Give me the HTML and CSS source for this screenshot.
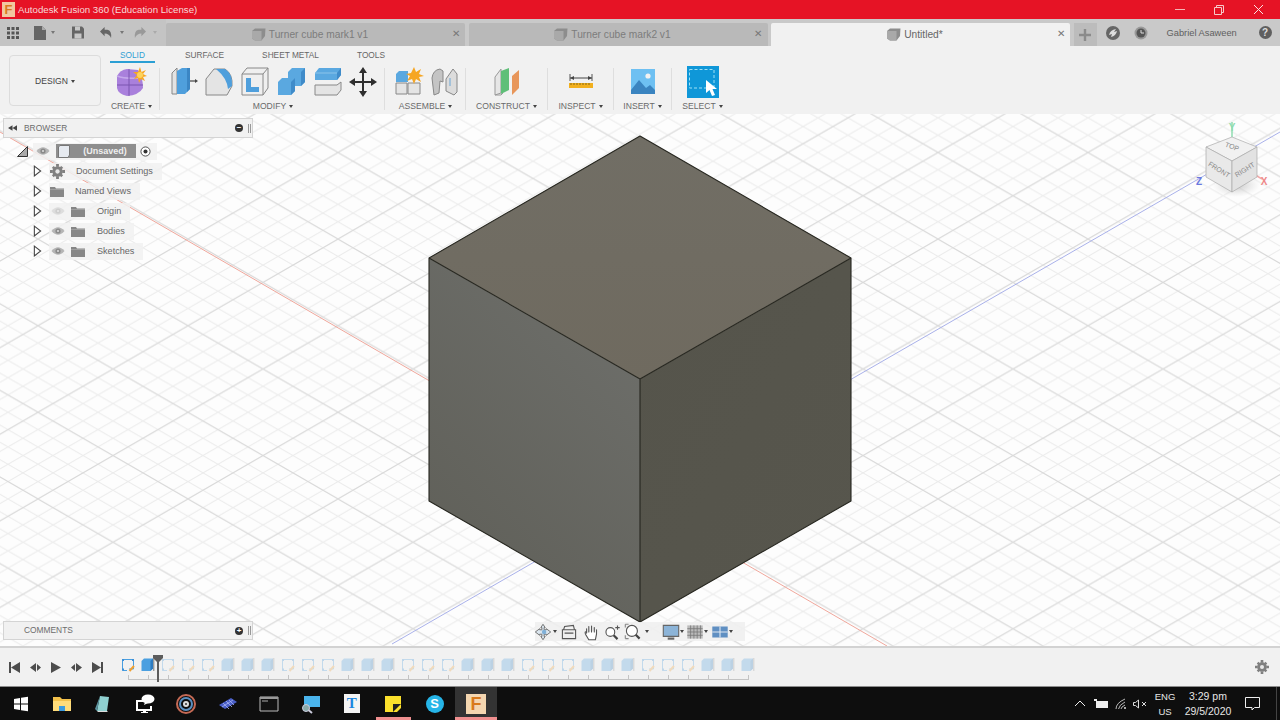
FILE: index.html
```html
<!DOCTYPE html>
<html lang="en">
<head>
<meta charset="utf-8">
<title>Autodesk Fusion 360</title>
<link rel="stylesheet" href="styles.css">
</head>
<body>
<svg class="defs" width="0" height="0" aria-hidden="true">
  <defs>
    <symbol id="tabcube" viewBox="0 0 14 13"><path d="M0 3 3 0.5H13.5L13 8 9.5 12.5H3L0 10.500Z" fill="#8d8d8d"/><path d="M0 3H9.500V12.500H3L0 10.500Z" fill="#a9a9a9"/></symbol>
    <symbol id="eye" viewBox="0 0 14 10"><path d="M0.5 5Q7-2.500 13.500 5 7 12.500 0.5 5Z" fill="#b5b5b5"/><circle cx="7" cy="5" r="2.600" fill="#8a8a8a"/><circle cx="7" cy="5" r="1" fill="#ddd"/></symbol>
    <symbol id="folder" viewBox="0 0 14 11"><path d="M0 1H5L6 2.500H14V11H0Z" fill="#868686"/><path d="M0 3.500H14" stroke="#aaa" stroke-width=".7"/></symbol>
    <symbol id="gear" viewBox="0 0 16 16"><g fill="#808080"><circle cx="8" cy="8" r="5.500"/><path d="M6.500 0H9.500V3H6.500ZM6.500 13H9.500V16H6.500ZM0 6.500H3V9.500H0ZM13 6.500H16V9.500H13ZM2 4 4 2 6 4 4 6ZM10 12 12 10 14 12 12 14ZM12 2 14 4 12 6 10 4ZM4 10 6 12 4 14 2 12Z"/></g><circle cx="8" cy="8" r="2.300" fill="#e8e8e8"/></symbol>
    <symbol id="expand" viewBox="0 0 10 13"><path d="M1.500 1 8.500 6.500 1.500 12Z" fill="#fff" stroke="#444" stroke-width="1.200"/></symbol>
    <symbol id="tlsketch" viewBox="0 0 14 14"><path d="M1.500 1.500H12.500V11H8M1.500 1.500V12.500H6" fill="none" stroke="#4a9fe0" stroke-width="1"/><path d="M1 1H3V3H1ZM11 1H13V3H11ZM1 10.500H3V12.500H1Z" fill="#3a8fd8"/><path d="M8.500 13 13 8" stroke="#f0a030" stroke-width="2"/></symbol>
    <symbol id="tlbody" viewBox="0 0 14 14"><path d="M0.500 3 3 0.500H12V10.500L9.500 13H0.500Z" fill="#4a9fe0"/><path d="M9.500 3 12 0.500V10.500L9.500 13Z" fill="#2f7cc0"/><path d="M12.800 0V13" stroke="#777" stroke-width="1"/></symbol>
  </defs>
</svg>

<div class="app">
  <header class="titlebar">
    <span class="applogo">F</span>
    <span class="apptitle">Autodesk Fusion 360 (Education License)</span>
    <div class="winctl">
      <svg class="winbtn" viewBox="0 0 39 19"><path d="M14 9.500H24" stroke="#f3b5b5" stroke-width="1"/></svg>
      <svg class="winbtn" viewBox="0 0 39 19"><path d="M14.500 7.500H21.500V14.500H14.500ZM16.500 7.500V5.500H23.500V12.500H21.500" fill="none" stroke="#f6c9c9" stroke-width="1"/></svg>
      <svg class="winbtn" viewBox="0 0 39 19"><path d="M15 5 24 14M24 5 15 14" stroke="#fbe3e3" stroke-width="1"/></svg>
    </div>
  </header>

  <div class="tabbar">
    <div class="qat">
      <svg class="waffle" viewBox="0 0 12 12"><path d="M0 0H3V3H0ZM4.500 0H7.500V3H4.500ZM9 0H12V3H9ZM0 4.500H3V7.500H0ZM4.500 4.500H7.500V7.500H4.500ZM9 4.500H12V7.500H9ZM0 9H3V12H0ZM4.500 9H7.500V12H4.500ZM9 9H12V12H9Z" fill="#555"/></svg>
      <svg class="qicon q-file" viewBox="0 0 12 14"><path d="M0 0H8L12 4V14H0Z" fill="#666"/><path d="M8 0V4H12" fill="#aaa"/></svg><i class="caret qc1"></i>
      <svg class="qicon q-save" viewBox="0 0 12 12"><path d="M0 0H10L12 2V12H0Z" fill="#666"/><path d="M3 0H8V4H3ZM2.500 7H9.500V12H2.500Z" fill="#c8c8c8"/></svg>
      <svg class="qicon q-undo" viewBox="0 0 13 12"><path d="M5 0V3H8Q13 4 12 12 10 7 5 7V10L0 5Z" fill="#666"/></svg><i class="caret qc2"></i>
      <svg class="qicon q-redo" viewBox="0 0 13 12"><path d="M8 0V3H5Q0 4 1 12 3 7 8 7V10L13 5Z" fill="#999"/></svg><i class="caret qc3 dim"></i>
    </div>
    <div class="tab">
      <span class="tabname"><svg class="tabicon"><use href="#tabcube"/></svg>Turner cube mark1 v1</span>
      <span class="tabx">✕</span>
    </div>
    <div class="tab">
      <span class="tabname"><svg class="tabicon"><use href="#tabcube"/></svg>Turner cube mark2 v1</span>
      <span class="tabx">✕</span>
    </div>
    <div class="tab active">
      <span class="tabname"><svg class="tabicon"><use href="#tabcube"/></svg>Untitled*</span>
      <span class="tabx">✕</span>
    </div>
    <div class="plus"><svg viewBox="0 0 12 12" class="plusicon"><path d="M4.800 0H7.200V4.800H12V7.200H7.200V12H4.800V7.200H0V4.800H4.800Z" fill="#8b8b8b"/></svg></div>
    <div class="userarea">
      <svg class="uicon u1" viewBox="0 0 14 14"><circle cx="7" cy="7" r="7" fill="#666"/><path d="M3 9Q4 4 10 3L8 6 11 5Q10 10 5 11L6 8Z" fill="#ddd"/></svg>
      <svg class="uicon u2" viewBox="0 0 14 14"><circle cx="7" cy="7" r="6.500" fill="#999"/><circle cx="7" cy="7" r="4.500" fill="#555"/><path d="M7 4V7H10" stroke="#ddd" fill="none"/></svg>
      <span class="username">Gabriel Asaween</span>
      <span class="help">?</span>
    </div>
  </div>

  <div class="ribbon">
    <button class="design">DESIGN<i class="caret dark"></i></button>
    <div class="rtools">
      <div class="rtabs">
        <span class="rtab on">SOLID</span>
        <span class="rtab">SURFACE</span>
        <span class="rtab">SHEET METAL</span>
        <span class="rtab">TOOLS</span>
      </div>
      <div class="groups">
        <div class="group g-create">
          <div class="gicons">
            <svg class="ticon" viewBox="0 0 36 32"><path d="M5 10Q8 4 15 3L26 4Q31 12 31 22 27 29 15 30 6 28 5 22Z" fill="#a980dc"/><path d="M5 10Q12 13 30 12" fill="none" stroke="#c6a9ec" stroke-width="1.500"/><path d="M5 19H31M17 3V30" stroke="#7a55b0" stroke-width="1"/><path d="M28 1 29.500 6 34 4 31 8 35 10 31 11 33 15 29 13 27 17 26 12 22 13 25 9 21 6 26 6Z" fill="#f6a623"/><circle cx="28" cy="9" r="3" fill="#fdd35a"/></svg>
          </div>
          <div class="glabel">CREATE<i class="caret dark"></i></div>
        </div>
        <div class="group g-modify">
          <div class="gicons">
            <svg class="ticon" viewBox="0 0 36 32"><path d="M7 7 12 2V28H7Z" fill="#e3e3e3" stroke="#888"/><path d="M12 5 17 2H25V23L20 28H12Z" fill="#4f9fdc"/><path d="M22 2H25V23L22 26Z" fill="#3b86c4"/><path d="M25 15H31" stroke="#444" stroke-width="1.200"/><path d="M30 13 33 15 30 17Z" fill="#444"/></svg>
            <svg class="ticon" viewBox="0 0 36 32"><path d="M5 13 13 3H24Q32 8 31 20L26 29H5Z" fill="#e4e4e4" stroke="#888"/><path d="M15 3H24Q32 8 31 20L27 23Q26 12 15 3Z" fill="#4f9fdc"/></svg>
            <svg class="ticon" viewBox="0 0 36 32"><path d="M5 8 10 2H31V22L26 29H5Z" fill="#efefef" stroke="#888"/><path d="M5 8H26V29M26 8 31 2" fill="none" stroke="#888"/><path d="M9 12H14V21H22V26H9Z" fill="#4f9fdc"/></svg>
            <svg class="ticon" viewBox="0 0 36 32"><path d="M15 6 19 2H32V16L28 20H15Z" fill="#5aa8e0"/><path d="M28 6 32 2V16L28 20Z" fill="#3f8bc9"/><path d="M5 16 9 12H22V25L18 29H5Z" fill="#5aa8e0"/><path d="M18 16 22 12V25L18 29Z" fill="#3f8bc9"/></svg>
            <svg class="ticon" viewBox="0 0 36 32"><path d="M6 7 10 2H32V9L28 14H6Z" fill="#5aa8e0"/><path d="M28 7 32 2V9L28 14Z" fill="#3f8bc9"/><path d="M6 7H28" stroke="#8cc4ea"/><path d="M6 19H28L32 16V24L28 29H6Z" fill="#e4e4e4" stroke="#888"/></svg>
            <svg class="ticon" viewBox="0 0 36 32"><path d="M18 5V27M7 16H29" stroke="#2f2f2f" stroke-width="2"/><path d="M18 1 22 7H14ZM18 31 14 25H22ZM4 16 10 12V20ZM32 16 26 20V12Z" fill="#2f2f2f"/></svg>
          </div>
          <div class="glabel">MODIFY<i class="caret dark"></i></div>
        </div>
        <div class="group g-assemble">
          <div class="gicons">
            <svg class="ticon" viewBox="0 0 36 32"><path d="M6 8 9 5H18V16H6Z" fill="#5aa8e0"/><path d="M6 17H17V28H6Z" fill="#e4e4e4" stroke="#888"/><path d="M18 17H30V28H18Z" fill="#e4e4e4" stroke="#888"/><path d="M24 1 26 6 31 3 29 8 34 10 29 11 31 16 26 13 24 18 22 13 17 15 20 10 16 8 21 7Z" fill="#f6a623"/></svg>
            <svg class="ticon" viewBox="0 0 36 32"><path d="M6 12Q7 4 14 3L17 5V16L14 15 13 27 8 29Z" fill="#c4c4c4" stroke="#888"/><path d="M20 13 27 3 31 8V26L28 29 20 25Z" fill="#dcdcdc" stroke="#888"/><path d="M24 12V20" stroke="#6aa6d6"/></svg>
          </div>
          <div class="glabel">ASSEMBLE<i class="caret dark"></i></div>
        </div>
        <div class="group g-construct">
          <div class="gicons">
            <svg class="ticon" viewBox="0 0 36 32"><path d="M6 11 12 3V27L6 29Z" fill="#e6e6e6" stroke="#999"/><path d="M12 5 20 2V24L12 28Z" fill="#5fbf78"/><path d="M6 29H12L14 27" stroke="#999" fill="none"/><path d="M23 10 30 4V22L23 29Z" fill="#e8965a"/></svg>
          </div>
          <div class="glabel">CONSTRUCT<i class="caret dark"></i></div>
        </div>
        <div class="group g-inspect">
          <div class="gicons">
            <svg class="ticon" viewBox="0 0 36 32"><path d="M7 12H29" stroke="#444"/><path d="M7 8V15M29 8V15" stroke="#555"/><path d="M7 12 11 10V14ZM29 12 25 10V14Z" fill="#444"/><path d="M6 17H30V22H6Z" fill="#f2b01e"/><path d="M8 17V19M11 17V19M14 17V19M17 17V19M20 17V19M23 17V19M26 17V19" stroke="#8a6a10"/></svg>
          </div>
          <div class="glabel">INSPECT<i class="caret dark"></i></div>
        </div>
        <div class="group g-insert">
          <div class="gicons">
            <svg class="ticon" viewBox="0 0 36 32"><path d="M6 3H30V28H6Z" fill="#6ec0f2"/><circle cx="23" cy="10" r="2.600" fill="#f2f2f2"/><path d="M6 24 14 14 21 22 25 19 30 24V28H6Z" fill="#3a84c0"/></svg>
          </div>
          <div class="glabel">INSERT<i class="caret dark"></i></div>
        </div>
        <div class="group g-select">
          <div class="gicons">
            <svg class="ticon" viewBox="0 0 36 32"><path d="M2 0H34V32H2Z" fill="#0f97d8"/><path d="M4.500 3.500H29V22H4.500Z" fill="none" stroke="#9fe0f5" stroke-dasharray="3 2"/><path d="M21 14 21 27 24.500 24 27 30 30 29 27.500 23 32 23Z" fill="#fff"/></svg>
          </div>
          <div class="glabel">SELECT<i class="caret dark"></i></div>
        </div>
      </div>
    </div>
  </div>

  <main class="viewport">
    <svg class="scene" viewBox="0 114 1280 532" preserveAspectRatio="none">
      <defs>
        <pattern id="grid" width="150" height="86.6" patternUnits="userSpaceOnUse" patternTransform="translate(488 152.500)">
          <path d="M-120 0 30 86.600M-90 0 60 86.600M-60 0 90 86.600M-30 0 120 86.600M30 0 180 86.600M60 0 210 86.600M90 0 240 86.600M120 0 270 86.600M-120 86.600 30 0M-90 86.600 60 0M-60 86.600 90 0M-30 86.600 120 0M30 86.600 180 0M60 86.600 210 0M90 86.600 240 0M120 86.600 270 0" stroke="#ececec" stroke-width="1" fill="none"/>
          <path d="M0 0 150 86.600M0 86.600 150 0" stroke="#d9d9d9" stroke-width="1.100" fill="none"/>
        </pattern>
        <linearGradient id="ftop" x1="0" y1="0" x2="0" y2="1"><stop offset="0" stop-color="#716e65"/><stop offset="1" stop-color="#6f6a5f"/></linearGradient>
        <linearGradient id="fleft" x1="0.800" y1="0" x2="0.200" y2="1"><stop offset="0" stop-color="#6e6f6b"/><stop offset="1" stop-color="#5f5f58"/></linearGradient>
        <linearGradient id="fright" x1="0" y1="0" x2="1" y2="1"><stop offset="0" stop-color="#55544b"/><stop offset="1" stop-color="#57564d"/></linearGradient>
        <radialGradient id="cubeshadow"><stop offset="0" stop-color="#999" stop-opacity=".55"/><stop offset="1" stop-color="#bbb" stop-opacity="0"/></radialGradient>
      </defs>
      <rect x="0" y="114" width="1280" height="532" fill="#fdfdfd"/>
      <rect x="0" y="114" width="1280" height="532" fill="url(#grid)"/>
      <path d="M0 132 887 646" stroke="#f0a79c" stroke-width="1" fill="none"/>
      <path d="M392 644 1280 132" stroke="#a9b1ea" stroke-width="1" fill="none"/>

      <path d="M640 136 851 258 640 379 429 258Z" fill="url(#ftop)"/>
      <path d="M429 258 640 379V622L429 501Z" fill="url(#fleft)"/>
      <path d="M851 258 640 379V622L851 501Z" fill="url(#fright)"/>
      <path d="M640 136 851 258V501L640 622 429 501V258ZM429 258 640 379 851 258M640 379V622" fill="none" stroke="#26261f" stroke-width="1.100" stroke-linejoin="round"/>

      <ellipse cx="1236" cy="185" rx="24" ry="12" fill="url(#cubeshadow)"/>
      <path d="M1232 137V122" stroke="#8fdcb0" stroke-width="1.500"/>
      <path d="M1232 161 1262 179" stroke="#f3a8a8" stroke-width="1.500"/>
      <path d="M1232 137 1257 147 1232 161 1206 147Z" fill="#f1f1f1" stroke="#aaa" stroke-width=".7"/>
      <path d="M1206 147 1232 161V192L1206 177Z" fill="#e9e9e9" stroke="#aaa" stroke-width=".7"/>
      <path d="M1257 147 1232 161V192L1257 177Z" fill="#e2e2e2" stroke="#aaa" stroke-width=".7"/>
      <text class="vc" x="1232" y="149" transform="rotate(20 1232 147)">TOP</text>
      <text class="vc" x="1219" y="172" transform="rotate(32 1219 170)">FRONT</text>
      <text class="vc" x="1245" y="172" transform="rotate(-32 1245 170)">RIGHT</text>
      <text class="axis ay" x="1232" y="131">Y</text>
      <text class="axis ax" x="1264" y="185">X</text>
      <text class="axis az" x="1199" y="185">Z</text>
    </svg>

    <section class="panel browser">
      <svg class="pback" viewBox="0 0 10 6"><path d="M5 0V6L0 3ZM10 0V6L5 3Z" fill="#444"/></svg>
      <span class="ptitle">BROWSER</span>
      <span class="pdot">−</span>
      <span class="pgrip"></span>
    </section>

    <div class="tree">
      <div class="row root">
        <svg class="corner" viewBox="0 0 11 11"><path d="M0.500 10.500 10.500 0.500V10.500Z" fill="#aaa" stroke="#333"/></svg>
        <div class="chip rootchip">
          <svg class="eye"><use href="#eye"/></svg>
          <span class="doc"><svg class="docicon" viewBox="0 0 12 13"><path d="M0.500 2 2 0.500H11.500V10L10 12.500H0.500Z" fill="#e6eaf0" stroke="#777"/></svg><span class="docname">(Unsaved)</span></span>
          <svg class="radio" viewBox="0 0 12 12"><circle cx="6" cy="6" r="5" fill="#fff" stroke="#444"/><circle cx="6" cy="6" r="2.200" fill="#333"/></svg>
        </div>
      </div>
      <div class="row">
        <svg class="exp"><use href="#expand"/></svg>
        <div class="chip"><svg class="gear"><use href="#gear"/></svg><span class="rname">Document Settings</span></div>
      </div>
      <div class="row">
        <svg class="exp"><use href="#expand"/></svg>
        <div class="chip"><svg class="fold"><use href="#folder"/></svg><span class="rname">Named Views</span></div>
      </div>
      <div class="row">
        <svg class="exp"><use href="#expand"/></svg>
        <div class="chip"><svg class="eye off"><use href="#eye"/></svg><svg class="fold infold"><use href="#folder"/></svg><span class="rname inname">Origin</span></div>
      </div>
      <div class="row">
        <svg class="exp"><use href="#expand"/></svg>
        <div class="chip"><svg class="eye"><use href="#eye"/></svg><svg class="fold infold"><use href="#folder"/></svg><span class="rname inname">Bodies</span></div>
      </div>
      <div class="row">
        <svg class="exp"><use href="#expand"/></svg>
        <div class="chip"><svg class="eye"><use href="#eye"/></svg><svg class="fold infold"><use href="#folder"/></svg><span class="rname inname">Sketches</span></div>
      </div>
    </div>

    <section class="panel comments">
      <span class="ptitle">COMMENTS</span>
      <span class="pdot">+</span>
      <span class="pgrip"></span>
    </section>

    <div class="navbar">
      <span class="nb"><svg class="nicon" viewBox="0 0 14 14"><path d="M7 0 9 3H8V5H10V4L14 7 10 10V9H8V11H9L7 14 5 11H6V9H4V10L0 7 4 4V5H6V3H5Z" fill="#dbe6ef" stroke="#666" stroke-width=".8"/><circle cx="8" cy="7" r="2" fill="#7fb0d8"/></svg><i class="caret dark"></i></span>
      <span class="nb nb-look"><svg class="nicon" viewBox="0 0 14 14"><path d="M1 5H13V13H1Z" fill="#eee" stroke="#555"/><path d="M2 5 3 2 11 1 12 5M3 8H11" stroke="#555" fill="none"/></svg></span>
      <span class="nb nb-hand"><svg class="nicon" viewBox="0 0 14 14"><path d="M3 8V4M5 7V2M7.500 7V1.500M10 7V3M3 8 3 7Q1 6 2 9L5 14H11L12 9V5" fill="#fff" stroke="#555" stroke-linecap="round"/></svg></span>
      <span class="nb nb-zoom"><svg class="nicon" viewBox="0 0 14 14"><circle cx="5.500" cy="7" r="4" fill="#fff" stroke="#555"/><path d="M8.500 10 12 13.500" stroke="#444" stroke-width="2"/><path d="M10 3H14M12 1V5" stroke="#555"/></svg></span>
      <span class="nb nb-zoom"><svg class="nicon" viewBox="0 0 14 14"><circle cx="6" cy="6" r="5" fill="#fff" stroke="#555"/><path d="M9.500 9.500 13 13" stroke="#444" stroke-width="2"/><path d="M0 0H3M0 0V3M0 13H3M0 13V10" stroke="#888"/></svg><i class="caret dark gapc"></i></span>
      <span class="nb nb-disp"><svg class="nicon" viewBox="0 0 14 14"><path d="M0 1H14V11H0Z" fill="#8cb4d8" stroke="#666"/><path d="M4 13H10" stroke="#666" stroke-width="2"/></svg><i class="caret dark tight"></i></span>
      <span class="nb nb-grid"><svg class="nicon" viewBox="0 0 14 14"><path d="M0 1H14V13H0Z" fill="#bbb"/><path d="M0 4H14M0 7H14M0 10H14M3 1V13M6 1V13M9 1V13M12 1V13" stroke="#777" stroke-width=".7"/></svg><i class="caret dark tight"></i></span>
      <span class="nb nb-view"><svg class="nicon" viewBox="0 0 14 14"><path d="M0 2H14V12H0Z" fill="#5f8fc2"/><path d="M7 2V12M0 7H14" stroke="#dfe8f2"/></svg><i class="caret dark tight"></i></span>
    </div>
  </main>

  <footer class="timeline">
    <div class="tctrls">
      <span class="tc"><svg viewBox="0 0 11 11"><path d="M0 0H2V11H0ZM11 0V11L2 5.500Z" fill="#4d4d4d"/></svg></span>
      <span class="tc"><svg viewBox="0 0 11 11"><path d="M6 1V10L0 5.500ZM7 2 11 5.500 7 9Z" fill="#4d4d4d"/></svg></span>
      <span class="tc"><svg viewBox="0 0 11 11"><path d="M1 0 11 5.500 1 11Z" fill="#4d4d4d"/></svg></span>
      <span class="tc"><svg viewBox="0 0 11 11"><path d="M5 1V10L11 5.500ZM4 2 0 5.500 4 9Z" fill="#4d4d4d"/></svg></span>
      <span class="tc"><svg viewBox="0 0 11 11"><path d="M9 0H11V11H9ZM0 0V11L9 5.500Z" fill="#4d4d4d"/></svg></span>
    </div>
    <div class="track">
      <svg class="ti"><use href="#tlsketch"/></svg><svg class="ti"><use href="#tlbody"/></svg>
      <svg class="ti f"><use href="#tlsketch"/></svg><svg class="ti f"><use href="#tlsketch"/></svg><svg class="ti f"><use href="#tlsketch"/></svg>
      <svg class="ti f"><use href="#tlbody"/></svg><svg class="ti f"><use href="#tlbody"/></svg><svg class="ti f"><use href="#tlbody"/></svg>
      <svg class="ti f"><use href="#tlsketch"/></svg><svg class="ti f"><use href="#tlsketch"/></svg><svg class="ti f"><use href="#tlsketch"/></svg>
      <svg class="ti f"><use href="#tlbody"/></svg><svg class="ti f"><use href="#tlbody"/></svg><svg class="ti f"><use href="#tlbody"/></svg>
      <svg class="ti f"><use href="#tlsketch"/></svg><svg class="ti f"><use href="#tlsketch"/></svg><svg class="ti f"><use href="#tlsketch"/></svg>
      <svg class="ti f"><use href="#tlbody"/></svg><svg class="ti f"><use href="#tlbody"/></svg><svg class="ti f"><use href="#tlbody"/></svg>
      <svg class="ti f"><use href="#tlsketch"/></svg><svg class="ti f"><use href="#tlsketch"/></svg><svg class="ti f"><use href="#tlsketch"/></svg>
      <svg class="ti f"><use href="#tlbody"/></svg><svg class="ti f"><use href="#tlbody"/></svg><svg class="ti f"><use href="#tlbody"/></svg>
      <svg class="ti f"><use href="#tlsketch"/></svg><svg class="ti f"><use href="#tlsketch"/></svg><svg class="ti f"><use href="#tlsketch"/></svg>
      <svg class="ti f"><use href="#tlbody"/></svg><svg class="ti f"><use href="#tlbody"/></svg><svg class="ti f"><use href="#tlbody"/></svg>
      <span class="scale"></span>
      <svg class="playhead" viewBox="0 0 10 27"><path d="M0 0H10V3L6 7V27H4V7L0 3Z" fill="#5c5c5c"/></svg>
    </div>
    <svg class="tlgear"><use href="#gear"/></svg>
  </footer>

  <nav class="taskbar">
    <div class="tapps">
      <span class="tapp"><svg class="ta" viewBox="0 0 20 20"><path d="M3 5 9 4V9.500H3ZM10 3.800 17 2.800V9.500H10ZM3 10.500H9V16L3 15ZM10 10.500H17V17.200L10 16.200Z" fill="#fff"/></svg></span>
      <span class="tapp"><svg class="ta" viewBox="0 0 20 20"><path d="M1 3H8L10 5H19V17H1Z" fill="#f3c14b"/><path d="M1 7H19V17H1Z" fill="#ffdc7a"/><path d="M7 12H13V17H7Z" fill="#3a9be0"/></svg></span>
      <span class="tapp"><svg class="ta" viewBox="0 0 20 20"><path d="M7 2 16 3 14 17 4 17Z" fill="#8fd0d0"/><path d="M7 2 4 17 2 15Z" fill="#5b93a0"/><path d="M4 17H14L15 18H5Z" fill="#ddd"/></svg></span>
      <span class="tapp"><svg class="ta" viewBox="0 0 20 20"><path d="M1 6H9V8H3V15H15V12H17V17H11V18H13V19H6V18H8V17H1Z" fill="#fff"/><ellipse cx="13" cy="5" rx="6.500" ry="4.500" fill="#fff"/><path d="M10 8 9 11 13 9Z" fill="#fff"/></svg></span>
      <span class="tapp"><svg class="ta" viewBox="0 0 20 20"><circle cx="10" cy="10" r="9" fill="none" stroke="#c56a55" stroke-width="2"/><circle cx="10" cy="10" r="6" fill="none" stroke="#5a8fc0" stroke-width="2"/><circle cx="10" cy="10" r="3" fill="#ddd"/><circle cx="10" cy="10" r="1" fill="#333"/></svg></span>
      <span class="tapp"><svg class="ta" viewBox="0 0 20 20"><path d="M1 11 13 4 19 8 7 15Z" fill="#4a5fc8"/><path d="M5 9 11 15M8 7 14 13M11 6 16 11M4 13 15 6" stroke="#aab4f0" stroke-width=".8"/></svg></span>
      <span class="tapp"><svg class="ta" viewBox="0 0 20 20"><path d="M1 3H19V17H1Z" fill="#111" stroke="#bbb"/><path d="M1 3H19V5H1Z" fill="#999"/><path d="M3 7H9" stroke="#aaa"/></svg></span>
      <span class="tapp"><svg class="ta" viewBox="0 0 20 20"><path d="M4 2H20V13H4Z" fill="#4ab4ec"/><circle cx="6" cy="14" r="3.500" fill="#8aa" stroke="#ccd"/><path d="M8.500 16 12 19" stroke="#ccd" stroke-width="2"/></svg></span>
      <span class="tapp"><span class="tfile">T</span></span>
      <span class="tapp running"><svg class="ta" viewBox="0 0 20 20"><path d="M2 2H18V14L14 18H2Z" fill="#fbe02c"/><path d="M10 18 18 10H10Z" fill="#222"/></svg></span>
      <span class="tapp"><span class="skype">S</span></span>
      <span class="tapp running current"><span class="tfusion">F</span></span>
    </div>
    <div class="tray">
      <svg class="tr tr-chev" viewBox="0 0 12 7"><path d="M1 6 6 1 11 6" fill="none" stroke="#eee"/></svg>
      <svg class="tr tr-bat" viewBox="0 0 14 9"><path d="M2 2H14V9H2Z" fill="#eee"/><path d="M0 0H3V2H0Z" fill="#eee"/></svg>
      <svg class="tr tr-wifi" viewBox="0 0 13 12"><path d="M1 11Q1 5 10 1M3.500 11Q4 7 10 4M6 11Q6 9 10 7" fill="none" stroke="#ccc" stroke-width=".9"/><circle cx="10" cy="10" r="1" fill="#ddd"/></svg>
      <svg class="tr tr-vol" viewBox="0 0 14 10"><path d="M0.500 3.500H2.500L5.500 1V9L2.500 6.500H0.500Z" fill="none" stroke="#ddd"/><path d="M9 3 13 7M13 3 9 7" stroke="#ddd"/></svg>
      <div class="lang"><span>ENG</span><span>US</span></div>
      <div class="clock"><span>3:29 pm</span><span>29/5/2020</span></div>
      <svg class="tr tr-note" viewBox="0 0 15 14"><path d="M0.500 0.500H14.500V10.500H9.500L7 13V10.500H0.500Z" fill="none" stroke="#eee"/></svg>
      <span class="showdesk"></span>
    </div>
  </nav>
</div>
</body>
</html>
```

FILE: styles.css
```css
* { box-sizing: border-box; }
html, body { margin: 0; padding: 0; height: 100%; overflow: hidden; }
body { font-family: "Liberation Sans", Arial, sans-serif; color: #666; background: #fff; }
.defs { position: absolute; }
.app { width: 1280px; height: 720px; display: flex; flex-direction: column; }

.caret { display: inline-block; width: 0; height: 0; border-left: 2.500px solid transparent; border-right: 2.500px solid transparent; border-top: 3px solid #777; }
.caret.dark { border-top-color: #444; margin-left: 3px; vertical-align: 1px; }
.caret.dim { border-top-color: #aaa; }

/* title bar */
.titlebar { height: 19px; background: #e61325; display: flex; align-items: center; padding-left: 2px; color: #f7d9d9; flex: none; }
.applogo { width: 13px; height: 15px; background: #f2c8a0; color: #d97a1e; font: bold 13px/15px "Liberation Sans", sans-serif; text-align: center; }
.apptitle { font-size: 9.700px; margin-left: 3px; }
.winctl { margin-left: auto; display: flex; margin-right: 2px; }
.winbtn { width: 39px; height: 19px; display: block; }

/* tab bar */
.tabbar { height: 27px; background: #c9c9c9; display: flex; align-items: flex-end; flex: none; position: relative; }
.qat { width: 166px; height: 27px; display: flex; align-items: center; flex: none; background: #c4c4c4; }
.waffle { width: 12px; height: 12px; margin-left: 7px; }
.qicon { width: 12px; height: 13px; flex: none; }
.q-file { margin-left: 15px; height: 14px; }
.qc1 { margin-left: 5px; }
.q-save { margin-left: 17px; }
.q-undo { margin-left: 16px; }
.qc2 { margin-left: 8px; }
.q-redo { margin-left: 10px; }
.qc3 { margin-left: 7px; }
.tab { width: 299px; height: 23px; background: #b9b9b9; margin-right: 3.500px; border-radius: 2px 2px 0 0; display: flex; align-items: center; position: relative; color: #7c7c7c; font-size: 10.200px; justify-content: center; padding-right: 11px; flex: none; }
.tab.active { background: #f1f1f1; color: #666; }
.tabname { display: flex; align-items: center; }
.tabicon { width: 14px; height: 13px; margin-right: 3px; }
.tabx { position: absolute; right: 3.500px; top: 4px; width: 12px; font-size: 10px; line-height: 14px; text-align: center; color: #777; }
.plus { width: 23px; height: 23px; background: #bcbcbc; display: flex; align-items: center; justify-content: center; flex: none; }
.plusicon { width: 12px; height: 12px; }
.userarea { height: 27px; flex: 1; display: flex; align-items: center; }
.uicon { width: 14px; height: 14px; }
.u1 { margin-left: 9px; }
.u2 { margin-left: 14px; }
.username { font-size: 9.300px; color: #5f5f5f; margin-left: 19px; width: 70px; white-space: nowrap; }
.help { width: 13px; height: 13px; border-radius: 50%; background: #5f5f5f; color: #ddd; font: bold 10px/13px "Liberation Sans", sans-serif; text-align: center; margin-left: 22px; }

/* ribbon */
.ribbon { height: 68px; background: #f1f1f1; display: flex; align-items: flex-start; padding-left: 9px; flex: none; }
.design { width: 92px; height: 51px; margin: 9px 3px 0 0; border: 1px solid #dcdcdc; border-radius: 4px; background: #f1f1f1; color: #444; font: 8.600px "Liberation Sans", sans-serif; padding: 0; flex: none; }
.rtools { display: flex; flex-direction: column; padding-top: 2px; }
.rtabs { display: flex; gap: 38px; height: 15px; margin-left: 6px; font-size: 8.300px; line-height: 14px; color: #666; }
.rtab { white-space: nowrap; height: 15px; }
.rtab.on { color: #2f9fd3; border-bottom: 2px solid #2b9fd4; padding: 0 10px; margin-right: -8px; }
.groups { display: flex; margin-top: 3px; }
.group { position: relative; display: flex; flex-direction: column; align-items: center; border-right: 1px solid transparent; flex: none; }
.group::after { content: ""; position: absolute; right: -1px; top: 2px; bottom: 3px; width: 1px; background: #dedede; }
.group.g-select::after { display: none; }
.g-create { width: 56px; }
.g-create .ticon { margin-right: 4px; }
.g-modify { width: 225px; padding-left: 2px; }
.g-assemble { width: 81px; padding-left: 1px; }
.g-construct { width: 82px; }
.g-inspect { width: 66px; }
.g-insert { width: 58px; }
.g-select { width: 60px; padding-left: 2px; }
.gicons { display: flex; height: 33px; }
.ticon { width: 36px; height: 32px; display: block; flex: none; }
.glabel { font-size: 8.600px; line-height: 14px; height: 14px; color: #6a6a6a; white-space: nowrap; }

/* viewport */
.viewport { flex: 1; position: relative; overflow: hidden; min-height: 0; }
.scene { position: absolute; inset: 0; width: 100%; height: 100%; display: block; }
.vc { font: 7px "Liberation Sans", sans-serif; fill: #888; text-anchor: middle; }
.axis { font: bold 10px "Liberation Sans", sans-serif; text-anchor: middle; }
.ay { fill: #8fdcb0; } .ax { fill: #e88; } .az { fill: #6a78e0; }

.panel { position: absolute; left: 3px; width: 250px; background: #f1f1f1; border: 1px solid #d4d4d4; display: flex; align-items: center; font-size: 8.400px; color: #6c6c6c; }
.browser { top: 4px; height: 20px; }
.comments { top: 507px; height: 19px; }
.pback { width: 9px; height: 6px; margin-left: 4px; margin-right: 7px; }
.ptitle { padding-bottom: 1px; }
.comments .ptitle { margin-left: 20px; }
.pdot { margin-left: auto; width: 8px; height: 8px; border-radius: 50%; background: #333; color: #fff; font: bold 8px/8px "Liberation Sans", sans-serif; text-align: center; }
.pgrip { width: 3px; height: 9px; margin: 0 1px 0 5px; border-left: 1px solid #999; border-right: 1px solid #999; }

.tree { position: absolute; left: 0; top: 27px; display: flex; flex-direction: column; font-size: 9.100px; color: #666; }
.row { height: 20px; display: flex; align-items: center; padding-left: 33px; }
.exp { width: 9px; height: 12px; margin-right: 7px; flex: none; }
.chip { height: 17px; background: rgba(241,241,241,.85); display: flex; align-items: center; padding: 0 9px 0 0; white-space: nowrap; }
.root { padding-left: 17px; }
.corner { width: 11px; height: 11px; margin-right: 5px; flex: none; }
.rootchip { padding: 0 6px 0 3px; }
.rootchip .eye { margin-left: 0; margin-right: 6px; }
.eye { width: 14px; height: 10px; margin-left: 2px; flex: none; }
.eye.off { opacity: .35; }
.gear { width: 15px; height: 15px; margin-left: 1px; flex: none; }
.fold { width: 14px; height: 11px; margin-left: 1px; flex: none; }
.infold { margin-left: 6px; }
.rname { margin-left: 11px; }
.inname { margin-left: 12px; }
.doc { width: 80px; height: 14px; background: #8e8e8e; color: #eee; display: flex; align-items: center; font-weight: bold; font-size: 9px; }
.docicon { width: 12px; height: 13px; margin-left: 2px; flex: none; }
.docname { flex: 1; text-align: center; padding-left: 4px; }
.radio { width: 11px; height: 11px; margin-left: 4px; flex: none; }

.navbar { position: absolute; left: 535px; top: 508px; width: 210px; height: 19px; background: rgba(238,238,238,.85); display: flex; align-items: center; padding-left: 1px; }
.nb { display: flex; align-items: center; flex: none; }
.nicon { width: 14px; height: 14px; overflow: visible; flex: none; transform: scale(1.1); }
.nb .caret.dark { margin: 0 0 0 3px; }
.nb .caret.gapc { margin-left: 5px; }
.nb .caret.tight { margin-left: 2px; }
.nb-look { margin-left: 5px; }
.nb-hand { margin-left: 8px; }
.nb-zoom { margin-left: 7px; }
.nb-disp { margin-left: 15px; }
.nb-grid { margin-left: 4px; }
.nb-view { margin-left: 5px; }

/* timeline */
.timeline { height: 40px; background: #f1f1f1; border-top: 2px solid #d2d2d2; display: flex; align-items: flex-start; padding-left: 4px; position: relative; flex: none; }
.tctrls { display: flex; margin-top: 13px; flex: none; }
.tc { width: 20.700px; height: 12px; display: flex; justify-content: center; align-items: center; }
.tc svg { width: 11px; height: 11px; }
.track { position: relative; display: flex; margin: 7px 0 0 10.500px; height: 27px; flex: none; }
.ti { width: 14px; height: 14px; margin: 3px 3px 0; flex: none; }
.ti.f { opacity: .27; }
.scale { position: absolute; left: 10px; top: 18px; width: 621px; height: 7px; border-bottom: 1px solid #c4c4c4; background: repeating-linear-gradient(to right, #c4c4c4 0 1px, transparent 1px 20px) 0 2px / 100% 5px no-repeat; }
.playhead { position: absolute; left: 35px; top: 0; width: 10px; height: 27px; }
.tlgear { width: 14px; height: 14px; margin: 12px 11px 0 auto; }

/* taskbar */
.taskbar { height: 34px; background: #0e0e0e; display: flex; border-top: 1px solid #8c8c8c; flex: none; color: #e6e6e6; }
.tapps { display: flex; }
.tapp { width: 41.400px; height: 33px; display: flex; align-items: center; justify-content: center; position: relative; flex: none; }
.tapp.running::after { content: ""; position: absolute; left: 3px; right: 3px; bottom: 0; height: 3px; background: #ef8f8f; }
.tapp.current { background: #333; }
.tapp.current::after { left: 0; right: 0; }
.ta { width: 20px; height: 20px; }
.tfile { width: 16px; height: 19px; background: #f4f4f4; color: #1a86e0; font: bold 15px/19px "Liberation Serif", serif; text-align: center; }
.skype { width: 18px; height: 18px; border-radius: 50%; background: #26b5e8; color: #fff; font: bold 13px/18px "Liberation Sans", sans-serif; text-align: center; }
.tfusion { width: 20px; height: 20px; background: #f4d6b0; color: #d9791b; font: bold 18px/20px "Liberation Sans", sans-serif; text-align: center; }
.tray { margin-left: auto; display: flex; align-items: center; height: 33px; }
.tr { flex: none; }
.tr-chev { width: 12px; height: 7px; margin-right: 8px; }
.tr-bat { width: 14px; height: 9px; margin-right: 7px; }
.tr-wifi { width: 13px; height: 12px; margin-right: 5px; }
.tr-vol { width: 14px; height: 10px; margin-right: 4px; }
.lang, .clock { display: flex; flex-direction: column; align-items: center; font-size: 10.500px; line-height: 15px; flex: none; }
.lang { width: 28px; font-size: 9.500px; }
.clock { width: 50px; margin-left: 4px; }
.tr-note { width: 15px; height: 14px; margin-left: 12px; }
.showdesk { width: 4px; height: 33px; border-left: 1px solid #444; margin-left: 16px; }
```
